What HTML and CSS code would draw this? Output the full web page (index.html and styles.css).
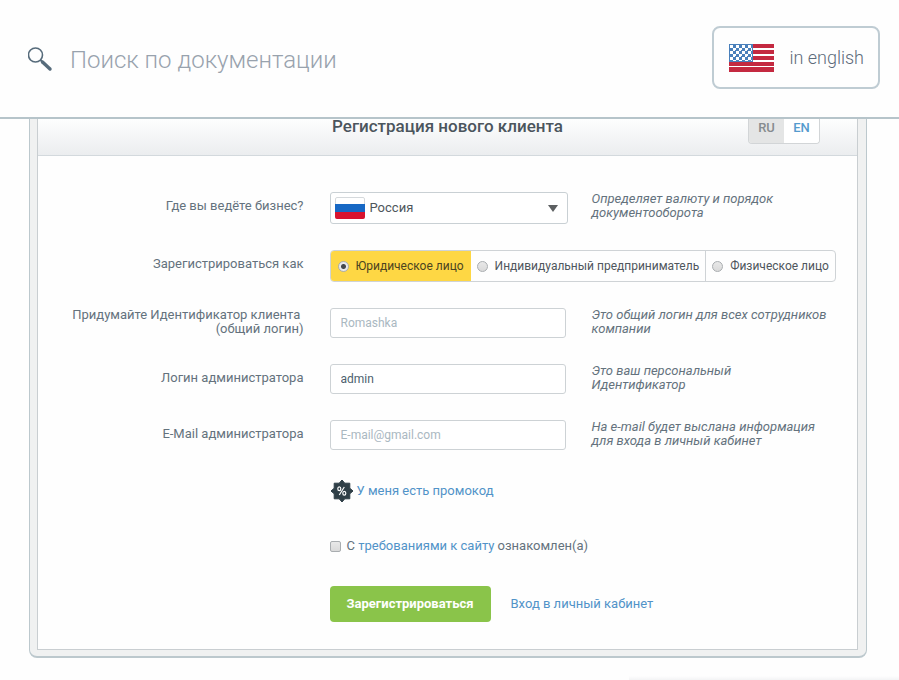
FILE: index.html
```html
<!DOCTYPE html>
<html lang="ru">
<head>
<meta charset="utf-8">
<title>Регистрация нового клиента</title>
<link rel="stylesheet" href="styles.css">
</head>
<body>
<header class="topbar">
  <form class="search" role="search">
    <label class="search-icon" for="search" aria-label="Поиск">
      <svg width="26" height="26" viewBox="0 0 26 26" fill="none" stroke="#566b7b">
        <circle cx="7.500" cy="8" r="7" stroke-width="1.600"/>
        <path d="M12.500 13l3 3" stroke-width="2"/>
        <path d="M14.500 15L22 22" stroke-width="3.400" stroke-linecap="round"/>
      </svg>
    </label>
    <input class="search-input" id="search" type="search" placeholder="Поиск по документации">
  </form>
  <a class="lang-link" href="#">
    <svg width="45" height="28" viewBox="0 0 45 28" aria-hidden="true">
      <path fill="#fff" d="M0 0h45v28H0z"/>
      <path fill="#c42940" d="M0 0h45v4H0zM0 6h45v4H0zM0 12h45v4H0zM0 18h45v4H0zM0 23h45v5H0z"/>
      <defs>
        <pattern id="stars" width="6" height="6" patternUnits="userSpaceOnUse">
          <path fill="#4a80bb" d="M0 0h6v6H0z"/>
          <path fill="#fff" d="M1 1h3v3H1zM4 4h3v3H4zM0 4h1v3H0zM4 0h3v1H4z"/>
        </pattern>
      </defs>
      <path fill="#4a80bb" d="M0 0h24v18H0z"/>
      <path fill="url(#stars)" d="M1 1h22v16H1z"/>
    </svg>
    <span>in english</span>
  </a>
</header>

<main class="frame">
  <section class="panel">
    <div class="panel-head">
      <h1 class="title">Регистрация нового клиента</h1>
      <nav class="switch">
        <a class="switch-item current" href="#">RU</a>
        <a class="switch-item" href="#">EN</a>
      </nav>
    </div>

    <form class="form">
      <div class="row">
        <label class="label" for="country">Где вы ведёте бизнес?</label>
        <div class="select-box">
          <svg class="flag" width="30" height="22" viewBox="0 0 30 22" aria-hidden="true">
            <rect x=".5" y=".5" width="29" height="21" rx="1.500" fill="#fff" stroke="#d5d9dc"/>
            <path fill="#1768c4" d="M0 7h30v8H0z"/>
            <path fill="#d8132f" d="M0 15h30v5a2 2 0 0 1-2 2H2a2 2 0 0 1-2-2z"/>
          </svg>
          <select class="select" id="country"><option>Россия</option></select>
          <svg class="arrow" width="10" height="8" viewBox="0 0 10 8" aria-hidden="true"><path fill="#5c5f61" d="M0 0h10L5 7z"/></svg>
        </div>
        <p class="hint">Определяет валюту и порядок<br>документооборота</p>
      </div>

      <div class="row">
        <span class="label" id="kind-label">Зарегистрироваться как</span>
        <div class="segments" role="radiogroup" aria-labelledby="kind-label">
          <label class="segment"><input class="radio" type="radio" name="kind" checked>Юридическое лицо</label>
          <label class="segment"><input class="radio" type="radio" name="kind">Индивидуальный предприниматель</label>
          <label class="segment"><input class="radio" type="radio" name="kind">Физическое лицо</label>
        </div>
      </div>

      <div class="row">
        <label class="label" for="client">Придумайте Идентификатор клиента&nbsp;<br>(общий логин)</label>
        <input class="field" id="client" type="text" placeholder="Romashka">
        <p class="hint">Это общий логин для всех сотрудников<br>компании</p>
      </div>

      <div class="row">
        <label class="label" for="admin">Логин администратора</label>
        <input class="field" id="admin" type="text" value="admin">
        <p class="hint">Это ваш персональный<br>Идентификатор</p>
      </div>

      <div class="row">
        <label class="label" for="email">E-Mail администратора</label>
        <input class="field" id="email" type="email" placeholder="E-mail@gmail.com">
        <p class="hint">На e-mail будет выслана информация<br>для входа в личный кабинет</p>
      </div>

      <div class="row">
        <div class="wide promo">
          <svg width="24" height="24" viewBox="0 0 24 24" aria-hidden="true">
            <path fill="#2f3f47" stroke="#2f3f47" stroke-linejoin="round" d="M12 1L14.800 4.200L19.800 4.200L19.800 9.200L23 12L19.800 14.800L19.800 19.800L14.800 19.800L12 23L9.200 19.800L4.200 19.800L4.200 14.800L1 12L4.200 9.200L4.200 4.200L9.200 4.200z"/>
            <g fill="none" stroke="#fff" stroke-width="1.200">
              <ellipse cx="9.300" cy="9.700" rx="1.500" ry="1.900"/>
              <ellipse cx="14.300" cy="14.300" rx="1.500" ry="1.900"/>
              <path d="M14.300 8L9.300 16"/>
            </g>
          </svg>
          <a class="link" href="#">У меня есть промокод</a>
        </div>
      </div>

      <div class="row">
        <div class="wide terms">
          <input class="check" id="terms" type="checkbox">
          <label for="terms">С <a class="link" href="#">требованиями к сайту</a> ознакомлен(а)</label>
        </div>
      </div>

      <div class="row">
        <div class="wide actions">
          <button class="submit" type="submit">Зарегистрироваться</button>
          <a class="link" href="#">Вход в личный кабинет</a>
        </div>
      </div>
    </form>
  </section>
</main>
<div class="dock"></div>
</body>
</html>
```
FILE: styles.css
```css
* { box-sizing: border-box; }

body {
  margin: 0;
  background: #fefefe;
  color: #64727d;
  font: 13px/14px Roboto, "Liberation Sans", sans-serif;
}

a { text-decoration: none; }
svg { display: block; flex: none; }

.topbar {
  display: flex;
  align-items: center;
  justify-content: space-between;
  padding: 26px 19px 28px 28px;
  border-bottom: 2px solid #b6c4ca;
}

.search {
  display: flex;
  align-items: center;
  flex: 1;
  gap: 16px;
  padding-top: 4px;
}

.search-input {
  flex: 1;
  min-width: 0;
  height: 40px;
  padding: 0;
  border: 0;
  outline: 0;
  background: none;
  color: #566b7b;
  font: 300 24px/32px Roboto, sans-serif;
}

.search-input::placeholder { color: #98a2ad; }

.lang-link {
  display: flex;
  align-items: center;
  gap: 15px;
  height: 63px;
  padding: 0 14px 0 15px;
  border: 2px solid #bfccd3;
  border-radius: 8px;
  color: #5d6b7b;
  font-size: 18px;
  font-weight: 300;
}

.frame {
  margin: 0 32px 0 29px;
  padding: 0 8px 6px 7px;
  border: solid #bcc8cd;
  border-width: 0 1px 2px;
  border-radius: 0 0 8px 8px;
  background: #f0f1f1;
}

.panel {
  border: 1px solid #c9ced1;
  border-top: 0;
  background: #fefefe;
}

.panel-head {
  display: grid;
  grid-template-columns: 1fr auto 1fr;
  align-items: start;
  height: 37px;
  padding: 0 37px;
  border-bottom: 1px solid #d3d9dd;
  background: linear-gradient(#fdfefe, #ebedef);
}

.title {
  grid-column: 2;
  margin: 0;
  color: #4b555d;
  font-size: 17px;
  font-weight: 500;
  line-height: 14px;
}

.switch {
  display: flex;
  justify-self: end;
  overflow: hidden;
  border: 1px solid #d2d5d7;
  border-top: 0;
  border-radius: 0 0 4px 4px;
}

.switch-item {
  width: 35px;
  height: 24px;
  background: #fff;
  color: #559bce;
  font-weight: 500;
  line-height: 18px;
  text-align: center;
}

.switch-item.current {
  background: #e4e5e5;
  color: #868b8f;
}

.form {
  display: grid;
  gap: 26px;
  padding: 36px 0 27px 2px;
}

.row {
  display: grid;
  grid-template-columns: minmax(0, 1fr) 238px minmax(0, 1fr);
  column-gap: 24px;
  align-items: start;
}

.label {
  display: flex;
  align-items: center;
  justify-content: flex-end;
  min-height: 28px;
  padding-right: 2px;
  text-align: right;
}

.hint {
  margin: 0;
  font-style: italic;
}

.wide { grid-column: 2 / -1; }

.select-box { position: relative; }

.select {
  display: block;
  width: 100%;
  height: 32px;
  padding: 0 28px 0 39px;
  border: 1px solid #c9d0d4;
  border-radius: 3px;
  appearance: none;
  background: #fff;
  color: #4e565c;
  font: inherit;
}

.flag {
  position: absolute;
  top: 5px;
  left: 5px;
}

.arrow {
  position: absolute;
  top: 13px;
  right: 10px;
  pointer-events: none;
}

.field {
  width: 236px;
  height: 30px;
  padding: 0 10px;
  border: 1px solid #cdd2d5;
  border-radius: 3px;
  background: #fff;
  color: #4d5f6e;
  font: inherit;
  font-size: 12px;
}

.field::placeholder { color: #aab8c1; }

.segments {
  display: flex;
  grid-column: 2 / -1;
  justify-self: start;
  height: 32px;
  overflow: hidden;
  border: 1px solid #cfd3d6;
  border-radius: 4px;
}

.segment {
  display: flex;
  align-items: center;
  gap: 7px;
  padding: 0 6px;
  color: #4f565c;
  font-size: 12px;
  white-space: nowrap;
}

.segment + .segment + .segment { border-left: 1px solid #cfd3d6; }

.segment:first-child {
  margin: -1px 0 -1px -1px;
  padding: 0 7px 0 8px;
}

.segment:has(:checked) {
  background: #fed744;
  color: #4b4420;
}

.radio,
.check {
  flex: none;
  width: 11px;
  height: 11px;
  margin: 0;
  border: 1px solid #a9adb0;
  appearance: none;
  background: linear-gradient(#e8e8e8, #dadada);
}

.radio { border-radius: 50%; }
.check { border-radius: 2px; }

.radio:checked { background: radial-gradient(#44484c 0 2px, #e9e9ea 3px); }

.promo,
.terms,
.actions {
  display: flex;
  align-items: center;
}

.promo {
  gap: 3px;
  height: 30px;
}

.terms {
  gap: 6px;
  height: 28px;
}

.link { color: #5193c8; }

.actions { gap: 20px; }

.submit {
  height: 36px;
  padding: 0 17px;
  border: 0;
  border-radius: 4px;
  background: #8ac44a;
  color: #fff;
  font: 700 13px/16px Roboto, sans-serif;
}

.dock {
  position: fixed;
  right: 0;
  bottom: 0;
  width: 30%;
  height: 4px;
  background: linear-gradient(#fefefe, #f3f4f5);
}
```
